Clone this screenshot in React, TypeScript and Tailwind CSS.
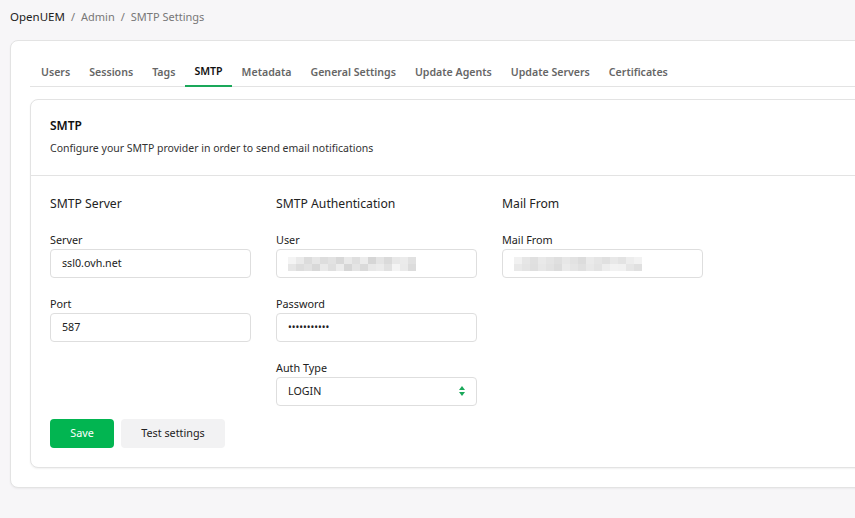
import React from "react";

const font = { fontFamily: '"Noto Sans", "Open Sans", sans-serif' };

function Blur({ cells }: { cells: string[] }) {
  return (
    <div className="flex flex-col">
      {[0, 1].map((r) => (
        <div key={r} className="flex">
          {cells.map((c, i) => (
            <div
              key={i}
              className="w-[8px] h-[7px]"
              style={{ backgroundColor: r === 0 ? c : cells[(i + 3) % cells.length] }}
            />
          ))}
        </div>
      ))}
    </div>
  );
}

function Field({ label, children }: { label: string; children: React.ReactNode }) {
  return (
    <div className="flex flex-col">
      <div className="text-[10.8px] leading-[16px] text-[#222] mb-[1px]">{label}</div>
      <div className="h-[29px] w-[201px] rounded-[4px] border border-[#dedede] bg-white flex items-center px-[11px] text-[10.7px] text-[#222]">
        {children}
      </div>
    </div>
  );
}

export default function App() {
  const tabs = ["Users", "Sessions", "Tags", "SMTP", "Metadata", "General Settings", "Update Agents", "Update Servers", "Certificates"];
  const userCells = ["#f4f4f4", "#eaeaea", "#dcdcdc", "#e6e6e6", "#dddddd", "#e2e2e2", "#d8d8d8", "#e9e9e9", "#dfdfdf", "#ececec", "#d6d6d6", "#e4e4e4", "#dadada", "#e8e8e8", "#ebebeb", "#e1e1e1"];
  const mailCells = ["#f1f1f1", "#e6e6e6", "#e0e0e0", "#e9e9e9", "#e4e4e4", "#dfdfdf", "#e7e7e7", "#e2e2e2", "#dcdcdc", "#eaeaea", "#e5e5e5", "#e0e0e0", "#e8e8e8", "#e3e3e3", "#ededed", "#f2f2f2"];
  return (
    <div className="w-[855px] h-[518px] bg-[#f7f6f8] overflow-hidden" style={font}>
      <div className="h-[40px] flex items-center pl-[10px] pb-[6px] text-[11px]">
        <span className="text-[#222] text-[11.5px]">OpenUEM</span>
        <span className="text-[#777] mx-[6px]">/</span>
        <span className="text-[#777]">Admin</span>
        <span className="text-[#777] mx-[6px]">/</span>
        <span className="text-[#777]">SMTP Settings</span>
      </div>
      <div className="ml-[10px] w-[870px] h-[448px] bg-white border border-[#e3e3e3] rounded-[8px] pl-[19px] pt-[18px] shadow-[0_1px_2px_rgba(0,0,0,0.05)]">
        <div className="flex border-b border-[#e3e3e3] h-[28px] pl-[1.5px]">
          {tabs.map((t) => (
            <div
              key={t}
              className={
                "px-[9.5px] h-[28px] flex items-center text-[10.6px] font-semibold " +
                (t === "SMTP" ? "text-[#111] border-b-2 border-[#1aa85a] -mb-px" : "text-[#666]")
              }
            >
              {t}
            </div>
          ))}
        </div>
        <div className="mt-[12px] w-[850px] h-[369px] border border-[#e3e3e3] rounded-[8px] bg-white shadow-[0_1px_2px_rgba(0,0,0,0.06)]">
          <div className="px-[19px] pt-[18px] h-[76px] border-b border-[#e3e3e3]">
            <div className="text-[12px] font-semibold text-[#111] leading-[16px]">SMTP</div>
            <div className="text-[10.5px] text-[#333] mt-[6px] leading-[16px]">Configure your SMTP provider in order to send email notifications</div>
          </div>
          <div className="px-[19px] pt-[20px] flex gap-[25px]">
            <div className="flex flex-col w-[201px]">
              <div className="text-[12.2px] text-[#222] leading-[16px] mb-[20px]">SMTP Server</div>
              <Field label="Server">ssl0.ovh.net</Field>
              <div className="h-[18px]" />
              <Field label="Port">587</Field>
            </div>
            <div className="flex flex-col w-[201px]">
              <div className="text-[12.2px] text-[#222] leading-[16px] mb-[20px]">SMTP Authentication</div>
              <Field label="User">
                <Blur cells={userCells} />
              </Field>
              <div className="h-[18px]" />
              <Field label="Password">
                <span className="tracking-[0px] text-[10px]">•••••••••••</span>
              </Field>
              <div className="h-[18px]" />
              <Field label="Auth Type">
                <div className="flex w-full items-center justify-between">
                  <span>LOGIN</span>
                  <svg width="6" height="12" viewBox="0 0 6 12">
                    <path d="M3 1 L6 5 L0 5 Z" fill="#1aa85a" />
                    <path d="M3 11 L6 7 L0 7 Z" fill="#1aa85a" />
                  </svg>
                </div>
              </Field>
            </div>
            <div className="flex flex-col w-[201px]">
              <div className="text-[12.2px] text-[#222] leading-[16px] mb-[20px]">Mail From</div>
              <Field label="Mail From">
                <Blur cells={mailCells} />
              </Field>
            </div>
          </div>
          <div className="px-[19px] mt-[13px] flex gap-[7px]">
            <button className="h-[29px] w-[64px] rounded-[4px] bg-[#02b551] text-white text-[10.8px]">Save</button>
            <button className="h-[29px] w-[104px] rounded-[4px] bg-[#f2f2f3] text-[#222] text-[10.8px]">Test settings</button>
          </div>
        </div>
      </div>
    </div>
  );
}
